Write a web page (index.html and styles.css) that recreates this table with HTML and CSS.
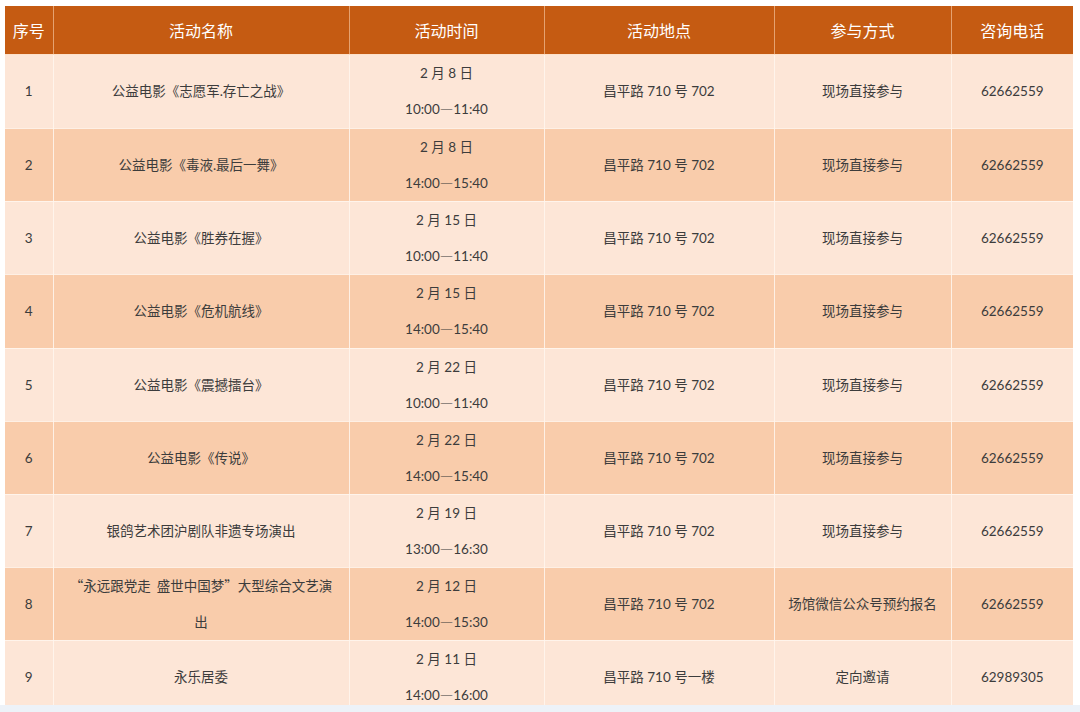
FILE: index.html
```html
<!DOCTYPE html>
<html lang="zh">
<head>
<meta charset="utf-8">
<title>活动安排</title>
<link rel="stylesheet" href="styles.css">
</head>
<body>
<div class="page">
  <div class="frame">
    <table class="schedule">
      <colgroup>
        <col class="c-no"><col class="c-name"><col class="c-time"><col class="c-place"><col class="c-way"><col class="c-tel">
      </colgroup>
      <thead>
        <tr class="head"><th>序号</th><th>活动名称</th><th>活动时间</th><th>活动地点</th><th>参与方式</th><th>咨询电话</th></tr>
      </thead>
      <tbody>
        <tr class="light r74"><td>1</td><td>公益电影《志愿军.存亡之战》</td><td>2 月 8 日<br>10:00<span class="cjk">—</span>11:40</td><td>昌平路 710 号 702</td><td>现场直接参与</td><td>62662559</td></tr>
        <tr class="dark r73"><td>2</td><td>公益电影《毒液.最后一舞》</td><td>2 月 8 日<br>14:00<span class="cjk">—</span>15:40</td><td>昌平路 710 号 702</td><td>现场直接参与</td><td>62662559</td></tr>
        <tr class="light r73"><td>3</td><td>公益电影《胜券在握》</td><td>2 月 15 日<br>10:00<span class="cjk">—</span>11:40</td><td>昌平路 710 号 702</td><td>现场直接参与</td><td>62662559</td></tr>
        <tr class="dark r74"><td>4</td><td>公益电影《危机航线》</td><td>2 月 15 日<br>14:00<span class="cjk">—</span>15:40</td><td>昌平路 710 号 702</td><td>现场直接参与</td><td>62662559</td></tr>
        <tr class="light r73"><td>5</td><td>公益电影《震撼擂台》</td><td>2 月 22 日<br>10:00<span class="cjk">—</span>11:40</td><td>昌平路 710 号 702</td><td>现场直接参与</td><td>62662559</td></tr>
        <tr class="dark r73"><td>6</td><td>公益电影《传说》</td><td>2 月 22 日<br>14:00<span class="cjk">—</span>15:40</td><td>昌平路 710 号 702</td><td>现场直接参与</td><td>62662559</td></tr>
        <tr class="light r73"><td>7</td><td>银鸽艺术团沪剧队非遗专场演出</td><td>2 月 19 日<br>13:00<span class="cjk">—</span>16:30</td><td>昌平路 710 号 702</td><td>现场直接参与</td><td>62662559</td></tr>
        <tr class="dark r72"><td>8</td><td><span class="cjk">“永远跟党走&nbsp;&nbsp;盛世中国梦”大型综合文艺演</span><br>出</td><td>2 月 12 日<br>14:00<span class="cjk">—</span>15:30</td><td>昌平路 710 号 702</td><td>场馆微信公众号预约报名</td><td>62662559</td></tr>
        <tr class="light r74"><td>9</td><td>永乐居委</td><td>2 月 11 日<br>14:00<span class="cjk">—</span>16:00</td><td>昌平路 710 号一楼</td><td>定向邀请</td><td>62989305</td></tr>
      </tbody>
    </table>
  </div>
</div>
</body>
</html>
```

FILE: styles.css
```css
html, body {
  margin: 0;
  padding: 0;
}
body {
  background: #edf2f8;
  width: 1080px;
  height: 712px;
  overflow: hidden;
}
.page {
  background: #ffffff;
  padding: 6px 7px 0 5px;
}
.frame {
  height: 699px;
  overflow: hidden;
}
.schedule {
  width: 1068px;
  border-collapse: collapse;
  table-layout: fixed;
  font-family: "Lato", "Noto Sans CJK SC", sans-serif;
}
.c-no { width: 48px; }
.c-name { width: 296px; }
.c-time { width: 195px; }
.c-place { width: 230px; }
.c-way { width: 177px; }
.c-tel { width: 122px; }

.schedule th,
.schedule td {
  padding: 0;
  text-align: center;
  vertical-align: middle;
  border: 1px solid rgba(255, 246, 238, 0.85);
}
.schedule tr:first-child th { border-top: none; }
.schedule th:first-child,
.schedule td:first-child { border-left: none; }
.schedule th:last-child,
.schedule td:last-child { border-right: none; }

.head {
  height: 48px;
  background: #c55b12;
}
.head th {
  font-family: "Noto Sans CJK SC", sans-serif;
  font-weight: 400;
  font-size: 16px;
  color: #ffffff;
  border-color: rgba(255, 220, 190, 0.55);
}
.schedule td {
  font-size: 13.5px;
  line-height: 36px;
  color: #3c3c3c;
}
.cjk {
  font-family: "Noto Sans CJK SC", sans-serif;
  line-height: 1;
}
.light { background: #fde6d7; }
.dark { background: #f9ccab; }
.r72 { height: 72px; }
.r73 { height: 73px; }
.r74 { height: 74px; }
```
